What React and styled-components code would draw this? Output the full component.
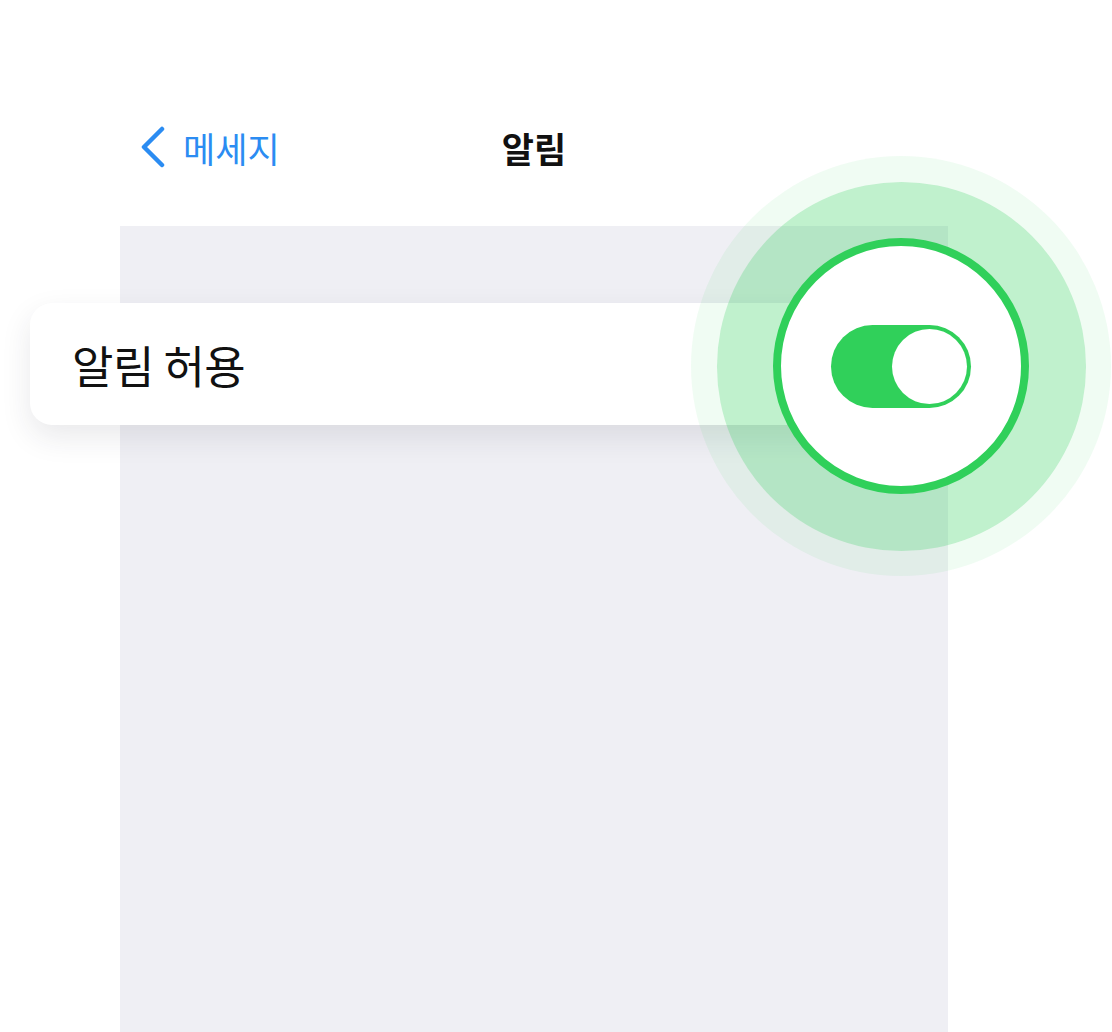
import React from "react";
import styled, { createGlobalStyle } from "styled-components";

const GlobalStyle = createGlobalStyle`
  html, body {
    margin: 0;
    padding: 0;
    background: #ffffff;
  }
  body {
    font-family: "Noto Sans CJK KR", "Noto Sans", sans-serif;
  }
`;

const Stage = styled.div`
  position: relative;
  width: 1112px;
  height: 1032px;
  overflow: hidden;
  background: #ffffff;
`;

const Screen = styled.div`
  margin-left: 120px;
  width: 828px;
  height: 100%;
  display: flex;
  flex-direction: column;
`;

const NavBar = styled.div`
  height: 226px;
  padding: 126px 18px 0;
  box-sizing: border-box;
  display: grid;
  grid-template-columns: 1fr auto 1fr;
  align-items: center;
  align-content: start;
`;

const BackButton = styled.div`
  display: flex;
  align-items: center;
  gap: 17px;
  color: #2b8cf2;
  font-size: 35px;
  line-height: 1;
`;

const Title = styled.div`
  font-size: 35px;
  font-weight: 700;
  color: #111111;
  line-height: 1;
`;

const Panel = styled.div`
  flex: 1;
  background: #efeff4;
  padding-top: 77px;
`;

const Card = styled.div`
  margin-left: -90px;
  width: 870px;
  height: 122px;
  box-sizing: border-box;
  background: #ffffff;
  border-radius: 22px;
  box-shadow: 0 12px 30px rgba(40, 40, 60, 0.1);
  display: flex;
  align-items: center;
  padding-left: 42px;
`;

const Label = styled.span`
  font-size: 45px;
  color: #111111;
  letter-spacing: -0.5px;
`;

const Ring = styled.div`
  position: absolute;
  left: ${(p) => p.cx - p.size / 2}px;
  top: ${(p) => p.cy - p.size / 2}px;
  width: ${(p) => p.size}px;
  height: ${(p) => p.size}px;
  border-radius: 50%;
  box-sizing: border-box;
  background: ${(p) => p.bg};
  border: ${(p) => (p.border ? `${p.border}px solid #30d05a` : "none")};
  display: flex;
  align-items: center;
  justify-content: center;
`;

const Toggle = styled.div`
  width: 140px;
  height: 83px;
  border-radius: 42px;
  background: #30d05a;
  display: flex;
  align-items: center;
  justify-content: flex-end;
  padding: 4px;
  box-sizing: border-box;
`;

const Knob = styled.div`
  width: 75px;
  height: 75px;
  border-radius: 50%;
  background: #ffffff;
`;

const Chevron = () => (
  <svg width="28" height="42" viewBox="0 0 28 42">
    <polyline
      points="24,3 6,21 24,39"
      fill="none"
      stroke="#2b8cf2"
      strokeWidth="4.5"
      strokeLinecap="round"
      strokeLinejoin="round"
    />
  </svg>
);

export default function App() {
  const cx = 901;
  const cy = 366;
  return (
    <Stage>
      <GlobalStyle />
      <Screen>
        <NavBar>
          <BackButton>
            <Chevron />
            <span>메세지</span>
          </BackButton>
          <Title>알림</Title>
          <div />
        </NavBar>
        <Panel>
          <Card>
            <Label>알림 허용</Label>
          </Card>
        </Panel>
      </Screen>
      <Ring cx={cx} cy={cy} size={420} bg="rgba(48, 208, 90, 0.07)" />
      <Ring cx={cx} cy={cy} size={369} bg="rgba(48, 208, 90, 0.25)" />
      <Ring cx={cx} cy={cy} size={256} bg="#ffffff" border={8}>
        <Toggle>
          <Knob />
        </Toggle>
      </Ring>
    </Stage>
  );
}
